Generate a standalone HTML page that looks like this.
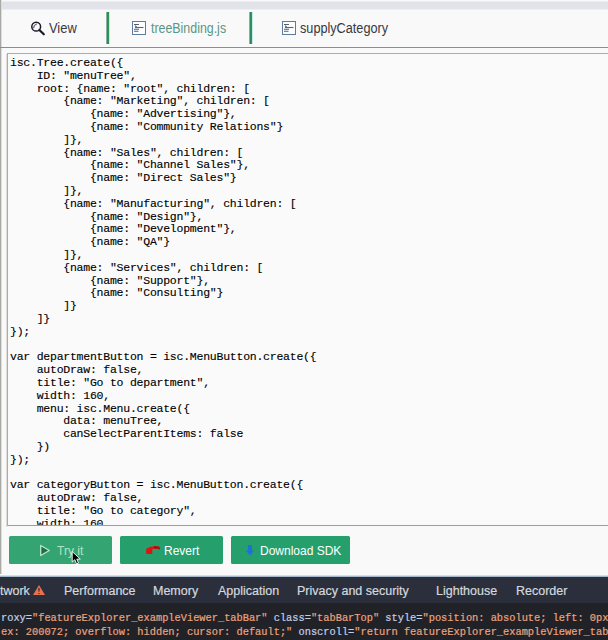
<!DOCTYPE html>
<html><head><meta charset="utf-8">
<style>
*{margin:0;padding:0;box-sizing:border-box}
html,body{width:608px;height:640px;overflow:hidden;background:#f9f9f9;position:relative;font-family:"Liberation Sans",sans-serif}
.abs{position:absolute}
#topband{left:0;top:1px;width:608px;height:9px;background:linear-gradient(#ececf2 0,#ececf2 11%,#e1e1ea 11%,#e3e3ec 89%,#efeff3 89%)}
#leftcol{left:0;top:0;width:1px;height:574px;background:#a9a9a6}
#leftcol2{left:1px;top:0;width:1px;height:574px;background:#dcdce2}
.sep{top:12px;width:4px;height:32px;background:linear-gradient(90deg,#8cb0a0 0,#8cb0a0 25%,#2d8560 25%,#2a9a55 75%,#c4ece6 75%)}
#hline{left:0;top:47px;width:608px;height:1px;background:#8c8b96}
.tab{top:21px;font-size:14px;transform:scaleX(0.885);transform-origin:0 0;line-height:15px;white-space:nowrap;color:#38383f}
#code{left:7px;top:53px;width:620px;height:473px;border:1px solid #aeae9e;border-bottom-color:#9c9cb0;background:#fafafb;overflow:hidden}
#codel{left:6px;top:54px;width:1px;height:473px;background:#dcdcd8}
#codetxt{position:absolute;left:2px;top:3px;font-family:"Liberation Mono",monospace;font-size:11.5px;letter-spacing:-0.24px;line-height:12.8px;color:#000;-webkit-text-stroke:0.12px #000;white-space:pre}
.btn{top:536px;height:28px;border-radius:1.5px;background:#25a06c;color:#fff;font-size:12px;white-space:nowrap}
.btn span{position:absolute;top:7px;line-height:14px}
#dt{left:0;top:576px;width:608px;height:64px;background:#212228;border-top:1px solid #a8b8cc}
#dtpre{left:0;top:575px;width:608px;height:1px;background:#dcdce8}
#dttabs{left:0;top:0;width:608px;height:26px;background:#2b2f3b}
.dtl{top:7px;font-size:12.5px;line-height:14px;color:#d4d8de;-webkit-text-stroke:0.2px #d4d8de;white-space:nowrap}
.dtc{left:1px;font-family:"Liberation Mono",monospace;font-size:10.33px;line-height:14px;white-space:pre;color:#c0cfe8;-webkit-text-stroke:0.2px}
.av{color:#eba37c}
</style></head><body>
<div id="topband" class="abs"></div>
<div id="leftcol" class="abs"></div>
<div id="leftcol2" class="abs"></div>

<!-- tabs -->
<svg class="abs" style="left:30px;top:21px" width="16" height="16" viewBox="0 0 16 16"><circle cx="6.2" cy="5.7" r="4.4" fill="none" stroke="#1a1a2a" stroke-width="1.5"/><path d="M3.6 7.2Q3.4 3.8 6.8 3" fill="none" stroke="#3a3a50" stroke-width="1"/><line x1="9.4" y1="9" x2="13.8" y2="13.3" stroke="#1a1a2a" stroke-width="2.2" stroke-linecap="round"/></svg>
<div class="abs tab" style="left:49px;transform:scaleX(0.92)">View</div>
<div class="abs sep" style="left:106px"></div>
<svg class="abs" style="left:132px;top:21px" width="14" height="14" viewBox="0 0 14 14"><rect x="0.5" y="0.5" width="13" height="13" fill="#fdfdff" stroke="#5b7c9c"/><path d="M2 3.5h5M3 4.6l1.6 1.4M2 8.3h5M2 10.3h4.5" stroke="#55606e" stroke-width="1.1"/><path d="M3 6.5h8.5" stroke="#55667a" stroke-width="1.1"/></svg>
<div class="abs tab" style="left:151px;color:#5a9686">treeBinding.js</div>
<div class="abs sep" style="left:249px"></div>
<svg class="abs" style="left:282px;top:21px" width="14" height="14" viewBox="0 0 14 14"><rect x="0.5" y="0.5" width="13" height="13" fill="#fdfdff" stroke="#5b7c9c"/><path d="M2 3.5h5M3 4.6l1.6 1.4M2 8.3h5M2 10.3h4.5" stroke="#55606e" stroke-width="1.1"/><path d="M3 6.5h8.5" stroke="#55667a" stroke-width="1.1"/></svg>
<div class="abs tab" style="left:300px;transform:scaleX(0.905)">supplyCategory</div>
<div id="hline" class="abs"></div>

<!-- code -->
<div id="codel" class="abs"></div>
<div id="code" class="abs"><div id="codetxt">isc.Tree.create({
    ID: "menuTree",
    root: {name: "root", children: [
        {name: "Marketing", children: [
            {name: "Advertising"},
            {name: "Community Relations"}
        ]},
        {name: "Sales", children: [
            {name: "Channel Sales"},
            {name: "Direct Sales"}
        ]},
        {name: "Manufacturing", children: [
            {name: "Design"},
            {name: "Development"},
            {name: "QA"}
        ]},
        {name: "Services", children: [
            {name: "Support"},
            {name: "Consulting"}
        ]}
    ]}
});

var departmentButton = isc.MenuButton.create({
    autoDraw: false,
    title: "Go to department",
    width: 160,
    menu: isc.Menu.create({
        data: menuTree,
        canSelectParentItems: false
    })
});

var categoryButton = isc.MenuButton.create({
    autoDraw: false,
    title: "Go to category",
    width: 160,
    menu: isc.Menu.create({</div></div>

<!-- buttons -->
<div class="abs btn" style="left:9px;width:103px;background:#34a472;color:#b4e2c6">
  <svg class="abs" style="left:30px;top:8px" width="12" height="13" viewBox="0 0 12 13"><path d="M1.7 1.5L10.3 6.5L1.7 11.5Z" fill="#1f6e45" stroke="#b8e8c8" stroke-width="1.3" stroke-linejoin="round"/></svg>
  <span style="left:48px;top:8px">Try it</span>
</div>
<div class="abs btn" style="left:120px;width:103px">
  <svg class="abs" style="left:25px;top:9px" width="16" height="11" viewBox="0 0 16 11"><path d="M1.2 9 L1.2 3.8 Q7 -0.3 14.5 1.5 L15 4.6 Q11 2.6 7.3 4.2 L7.3 9 Z" fill="#e01212"/><path d="M9 1.2 Q12.5 1 14.5 2.5 L15 4.5 Q12 3 9 3.8Z" fill="#a01010"/></svg>
  <span style="left:44px;top:8px">Revert</span>
</div>
<div class="abs btn" style="left:231px;width:119px">
  <svg class="abs" style="left:14px;top:8px" width="10" height="12" viewBox="0 0 10 12"><path d="M3 1h4v5.5h2.2L5 11.5L0.8 6.5H3z" fill="#2070d8"/></svg>
  <span style="left:29px;top:8px">Download SDK</span>
</div>

<svg class="abs" style="left:71px;top:550px" width="11" height="16" viewBox="0 0 11 16"><path d="M1.2 1.5L1.2 12L3.8 9.7L5.6 13.9L7.5 13.1L5.8 9.1L9.3 9.1Z" fill="#000" stroke="#fff" stroke-width="0.9" stroke-linejoin="round"/></svg>
<!-- devtools -->
<div id="dtpre" class="abs"></div>
<div id="dt" class="abs">
  <div id="dttabs" class="abs"></div>
  <div class="abs dtl" style="left:0">twork</div>
  <svg class="abs" style="left:33px;top:8px" width="12" height="10" viewBox="0 0 12 10"><path d="M6 0L12 10H0Z" fill="#e8704e"/><path d="M6 3v3.5M6 8v1" stroke="#2a2d36" stroke-width="1.2"/></svg>
  <div class="abs dtl" style="left:64px">Performance</div>
  <div class="abs dtl" style="left:153px">Memory</div>
  <div class="abs dtl" style="left:218px">Application</div>
  <div class="abs dtl" style="left:297px">Privacy and security</div>
  <div class="abs dtl" style="left:436px">Lighthouse</div>
  <div class="abs dtl" style="left:516px">Recorder</div>
  <div class="abs dtc" style="top:34px">roxy=<span class="av">"featureExplorer_exampleViewer_tabBar"</span> class=<span class="av">"tabBarTop"</span> style=<span class="av">"position: absolute; left: 0px</span></div>
  <div class="abs dtc av" style="top:48px">ex: 200072; overflow: hidden; cursor: default;"<span style="color:#c0cfe8"> onscroll=</span>"return featureExplorer_exampleViewer_tab</div>
</div>
</body></html>
